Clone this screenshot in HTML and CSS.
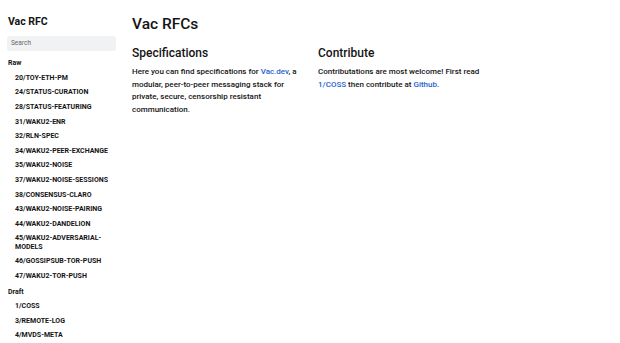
FILE: index.html
```html
<!DOCTYPE html>
<html>
<head>
<meta charset="utf-8">
<link rel="stylesheet" href="styles.css">
</head>
<body>
<div class="layout">
  <aside class="sidebar">
    <div class="brand">Vac RFC</div>
    <div class="search">Search</div>
    <div class="group">Raw</div>
    <ul class="items">
      <li>20/TOY-ETH-PM</li>
      <li>24/STATUS-CURATION</li>
      <li>28/STATUS-FEATURING</li>
      <li>31/WAKU2-ENR</li>
      <li>32/RLN-SPEC</li>
      <li>34/WAKU2-PEER-EXCHANGE</li>
      <li>35/WAKU2-NOISE</li>
      <li>37/WAKU2-NOISE-SESSIONS</li>
      <li>38/CONSENSUS-CLARO</li>
      <li>43/WAKU2-NOISE-PAIRING</li>
      <li>44/WAKU2-DANDELION</li>
      <li>45/WAKU2-ADVERSARIAL-MODELS</li>
      <li>46/GOSSIPSUB-TOR-PUSH</li>
      <li>47/WAKU2-TOR-PUSH</li>
    </ul>
    <div class="group">Draft</div>
    <ul class="items">
      <li>1/COSS</li>
      <li>3/REMOTE-LOG</li>
      <li>4/MVDS-META</li>
    </ul>
  </aside>
  <main class="main">
    <h1 class="title">Vac RFCs</h1>
    <div class="cols">
      <section>
        <h2 class="heading">Specifications</h2>
        <p class="text">Here you can find specifications for <a class="link">Vac.dev</a>, a modular, peer-to-peer messaging stack for private, secure, censorship resistant communication.</p>
      </section>
      <section>
        <h2 class="heading">Contribute</h2>
        <p class="text">Contributations are most welcome! First read <a class="link">1/COSS</a> then contribute at <a class="link">Github</a>.</p>
      </section>
    </div>
  </main>
</div>
</body>
</html>
```
FILE: styles.css
```css
html, body {
  margin: 0;
  padding: 0;
  background: #ffffff;
  color: #141414;
  font-family: Roboto, "Liberation Sans", sans-serif;
}
.layout {
  display: flex;
  height: 343px;
  overflow: hidden;
}
.sidebar {
  width: 109px;
  padding: 15px 8px 0 7px;
  flex-shrink: 0;
}
.brand {
  font-size: 10.5px;
  font-weight: 700;
  line-height: 14px;
  padding-left: 1px;
}
.search {
  margin-top: 7px;
  height: 15px;
  line-height: 15px;
  background: #f1f2f4;
  border-radius: 3px;
  font-size: 6.5px;
  color: #666;
  padding-left: 4px;
}
.group {
  font-size: 7px;
  font-weight: 700;
  line-height: 8.4px;
  margin-top: 8.2px;
  padding-left: 1px;
}
.items {
  list-style: none;
  margin: 0;
  padding: 0 0 0 8px;
}
.items li {
  font-size: 7px;
  font-weight: 700;
  line-height: 8.4px;
  padding-top: 6.2px;
  width: 100px;
}
.items + .group {
  margin-top: 7.2px;
}
.main {
  padding-left: 8px;
}
.title {
  margin: 14px 0 0 0;
  font-size: 15.5px;
  font-weight: 500;
  line-height: 20px;
}
.cols {
  display: grid;
  grid-template-columns: 170px 170px;
  column-gap: 16px;
  margin-top: 10.7px;
}
.heading {
  margin: 0;
  font-size: 12px;
  font-weight: 500;
  line-height: 16px;
}
.text {
  margin: 5.4px 0 0 0;
  font-size: 8px;
  font-weight: 500;
  line-height: 12.7px;
}
.link {
  color: #1f5fd0;
  text-decoration: none;
}
```
